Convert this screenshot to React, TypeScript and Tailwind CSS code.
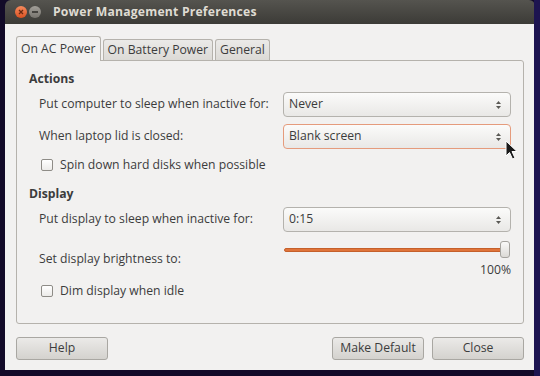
import React from "react";

const Combo = (props: { value: string; focus?: boolean }) => (
  <div
    className={`w-[228px] h-[25px] rounded-[4px] border flex items-center justify-between pl-[5px] pr-[8px] bg-gradient-to-b from-[#fbfbfa] to-[#e9e8e6] ${
      props.focus ? "border-[#e59b7c]" : "border-[#b4b2ad]"
    }`}
  >
    <span>{props.value}</span>
    <svg width="7" height="12" viewBox="0 0 7 12" className="text-[#5a5955]">
      <path d="M3.5 2 L6 5 L1 5 Z" fill="currentColor" />
      <path d="M3.5 10 L6 7 L1 7 Z" fill="currentColor" />
    </svg>
  </div>
);

const Check = (props: { label: string }) => (
  <div className="flex items-center h-[18px] ml-[2px]">
    <div className="w-[12px] h-[12px] rounded-[2px] border border-[#8e8c87] bg-gradient-to-b from-white to-[#ecebe9]" />
    <span className="ml-[7px]">{props.label}</span>
  </div>
);

const Button = (props: { label: string; w: string }) => (
  <div
    className={`${props.w} h-[23px] rounded-[3px] border border-[#a9a7a2] bg-gradient-to-b from-[#ebeae8] to-[#d4d2ce] flex items-center justify-center text-[#3c3c3c]`}
  >
    {props.label}
  </div>
);

export default function App() {
  return (
    <div
      className="relative w-[540px] h-[376px] bg-[#120a28] overflow-hidden text-[12.2px] text-[#3c3c3c] whitespace-nowrap"
      style={{ fontFamily: '"Open Sans", "Noto Sans", sans-serif' }}
    >
      <div className="absolute right-0 top-0 w-[6px] h-full bg-[#1d1450]" />
      <div className="ml-[5px] w-[530px] h-[370px] flex flex-col rounded-t-[6px] overflow-hidden">
        {/* title bar */}
        <div className="h-[24px] flex items-center bg-gradient-to-b from-[#55544f] to-[#3c3b37]">
          <div className="ml-[10px] w-[12px] h-[12px] rounded-full bg-gradient-to-b from-[#f58a5c] to-[#d9501f] flex items-center justify-center">
            <svg width="6" height="6" viewBox="0 0 6 6">
              <path d="M1 1 L5 5 M5 1 L1 5" stroke="#6a2a12" strokeWidth="1.3" />
            </svg>
          </div>
          <div className="ml-[2px] w-[12px] h-[12px] rounded-full bg-gradient-to-b from-[#a29f99] to-[#77746e] flex items-center justify-center">
            <div className="w-[6px] h-[1.5px] bg-[#45433f]" />
          </div>
          <span className="ml-[12px] font-bold text-[#dfdbd2] tracking-[0.2px]">Power Management Preferences</span>
        </div>

        {/* body */}
        <div className="flex-1 bg-[#f2f1f0] px-[11px] pt-[12px] flex flex-col">
          {/* tabs */}
          <div className="flex items-end h-[24px] gap-[2px] relative z-10">
            <div className="h-[25px] -mb-[1px] px-[4px] border border-b-0 border-[#b5b2ac] rounded-t-[3px] bg-[#f2f1f0] flex items-center">
              On AC Power
            </div>
            <div className="h-[21px] px-[4px] border border-b-0 border-[#b5b2ac] rounded-t-[3px] bg-gradient-to-b from-[#ebeae8] to-[#dcdad6] flex items-center">
              On Battery Power
            </div>
            <div className="h-[21px] px-[4px] border border-b-0 border-[#b5b2ac] rounded-t-[3px] bg-gradient-to-b from-[#ebeae8] to-[#dcdad6] flex items-center">
              General
            </div>
          </div>

          {/* notebook page */}
          <div className="h-[264px] border border-[#b5b2ac] rounded-b-[3px] rounded-tr-[3px] px-[12px] pt-[9px]">
            <div className="font-bold h-[18px] flex items-center">Actions</div>

            <div className="ml-[10px] mt-[4px] flex items-center justify-between">
              <span>Put computer to sleep when inactive for:</span>
              <Combo value="Never" />
            </div>
            <div className="ml-[10px] mt-[7px] flex items-center justify-between">
              <span>When laptop lid is closed:</span>
              <Combo value="Blank screen" focus />
            </div>
            <div className="ml-[10px] mt-[7px]">
              <Check label="Spin down hard disks when possible" />
            </div>

            <div className="font-bold h-[18px] flex items-center mt-[11px]">Display</div>

            <div className="ml-[10px] mt-[4px] flex items-center justify-between">
              <span>Put display to sleep when inactive for:</span>
              <Combo value="0:15" />
            </div>

            <div className="ml-[10px] mt-[9px] flex items-center justify-between">
              <span>Set display brightness to:</span>
              <div className="w-[228px] flex flex-col">
                <div className="relative h-[17px] flex items-center">
                  <div className="ml-[1px] w-[220px] h-[4px] rounded-full bg-[#e0743a] border border-[#c5602b]" />
                  <div className="absolute left-[217px] top-0 w-[10px] h-[17px] rounded-[3px] border border-[#a5a39e] bg-gradient-to-b from-[#fafaf9] to-[#dcdad6]" />
                </div>
                <div className="text-right mt-[4px] h-[16px] leading-[16px]">100%</div>
              </div>
            </div>

            <div className="ml-[10px] mt-[4px]">
              <Check label="Dim display when idle" />
            </div>
          </div>

          {/* buttons */}
          <div className="mt-[13px] flex items-center">
            <Button label="Help" w="w-[92px]" />
            <div className="flex-1" />
            <Button label="Make Default" w="w-[92px]" />
            <div className="w-[8px]" />
            <Button label="Close" w="w-[92px]" />
          </div>
        </div>
      </div>

      {/* mouse pointer */}
      <svg className="absolute left-[505px] top-[140px]" width="14" height="21" viewBox="0 0 14 21">
        <path
          d="M1 1 L1 16 L4.5 12.5 L7.5 19 L10 18 L7 11.5 L12 11.5 Z"
          fill="#1a1a1a"
          stroke="#ffffff"
          strokeWidth="1"
          strokeLinejoin="round"
        />
      </svg>
    </div>
  );
}
